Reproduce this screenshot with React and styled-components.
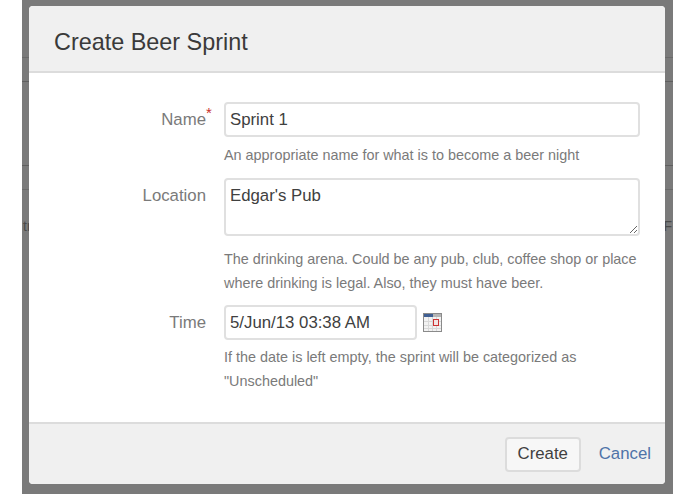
import React from 'react';
import styled, { createGlobalStyle } from 'styled-components';

const GlobalStyle = createGlobalStyle`
  html, body {
    margin: 0;
    background: #fff;
    font-family: "Liberation Sans", Arial, sans-serif;
  }
`;

const Backdrop = styled.div`
  position: relative;
  margin: 0 22px;
  height: 494px;
  background: #7a7a7a;
  overflow: hidden;
`;

const BehindRow = styled.div`
  height: ${props => props.$height}px;
  box-sizing: border-box;
  border-bottom: 1px solid ${props => props.$line};
`;

const BehindText = styled.div`
  display: flex;
  justify-content: space-between;
  height: 20px;
  padding: 0 1px;
  font-size: 14px;
  line-height: 20px;
  color: #4a4a4a;
`;

const Modal = styled.div`
  position: absolute;
  left: 7px;
  top: 6px;
  width: 636px;
  height: 478px;
  display: flex;
  flex-direction: column;
  background: #fff;
  border-radius: 4px;
  overflow: hidden;
`;

const Header = styled.header`
  height: 67px;
  box-sizing: border-box;
  padding: 23px 25px 0;
  background: #f0f0f0;
  border-bottom: 2px solid #dcdcdc;
`;

const Title = styled.h2`
  margin: 0;
  font-size: 23.4px;
  line-height: 26px;
  font-weight: 400;
  color: #3a3a3a;
`;

const Form = styled.form`
  flex: 1;
  padding-top: 29px;
`;

const Field = styled.div`
  display: grid;
  grid-template-columns: 177px 1fr;
  column-gap: 18px;
  margin-bottom: ${props => props.$gap}px;
`;

const Label = styled.label`
  justify-self: end;
  position: relative;
  padding-top: 8px;
  font-size: 16.8px;
  line-height: 20px;
  color: #7a7a7a;
`;

const Required = styled.span`
  position: absolute;
  left: 100%;
  top: 4px;
  font-size: 15px;
  line-height: 14px;
  color: #c9302c;
`;

const Control = styled.div`
  display: flex;
  align-items: center;
  gap: 6px;
`;

const inputStyle = `
  box-sizing: border-box;
  padding: 0 4px;
  background: #fff;
  border: 2px solid #e0e0e0;
  border-radius: 4px;
  font-family: "Liberation Sans", Arial, sans-serif;
  font-size: 16.8px;
  color: #404040;
  outline: none;
`;

const TextInput = styled.input`
  ${inputStyle}
  display: block;
  width: ${props => props.$width}px;
  height: 35px;
`;

const TextArea = styled.textarea`
  ${inputStyle}
  display: block;
  width: 416px;
  height: 58px;
  padding-top: 6px;
  line-height: 20px;
  resize: vertical;
`;

const Hint = styled.p`
  grid-column: 2;
  width: 430px;
  margin: ${props => props.$top}px 0 0;
  font-size: 14.4px;
  line-height: 24px;
  color: #7a7a7a;
`;

const Footer = styled.footer`
  height: 62px;
  box-sizing: border-box;
  display: flex;
  align-items: center;
  justify-content: flex-end;
  gap: 18px;
  padding-right: 14px;
  background: #f0f0f0;
  border-top: 2px solid #dcdcdc;
`;

const CreateButton = styled.button`
  width: 76px;
  height: 35px;
  padding: 0;
  background: #f7f7f7;
  border: 2px solid #dcdcdc;
  border-radius: 4px;
  font-family: "Liberation Sans", Arial, sans-serif;
  font-size: 16.8px;
  color: #404040;
`;

const CancelLink = styled.a`
  font-size: 16.8px;
  color: #4f73a8;
  text-decoration: none;
`;

const CalendarIcon = () => (
  <svg width="19" height="19" viewBox="0 0 19 19" aria-hidden="true">
    <rect x="0.5" y="0.5" width="18" height="18" fill="#f2f2f2" stroke="#8a8a8a" />
    <rect x="1" y="1" width="9" height="3" fill="#3f5f93" />
    <rect x="10" y="1" width="8" height="3" fill="#b5b5b5" />
    <path d="M1 8.5h17M1 12.5h17M1 15.5h17M5.5 4v14M9.5 4v14M13.5 4v14" stroke="#d8d8d8" />
    <rect x="10.5" y="6.5" width="5" height="6" fill="#f4e4e4" stroke="#cc3333" />
  </svg>
);

const App = () => (
  <>
    <GlobalStyle />
    <Backdrop>
      <BehindRow $height={58} $line="#6a6a6a" />
      <BehindRow $height={24} $line="#5f5f5f" />
      <BehindRow $height={84} $line="#5f5f5f" />
      <BehindRow $height={24} $line="#6a6a6a" />
      <BehindRow $height={26} $line="transparent" />
      <BehindText>
        <span>tr</span>
        <span>IF</span>
      </BehindText>
      <Modal>
        <Header>
          <Title>Create Beer Sprint</Title>
        </Header>
        <Form>
          <Field $gap={11}>
            <Label>
              Name
              <Required>*</Required>
            </Label>
            <TextInput $width={416} defaultValue="Sprint 1" />
            <Hint $top={6}>An appropriate name for what is to become a beer night</Hint>
          </Field>
          <Field $gap={10}>
            <Label>Location</Label>
            <TextArea defaultValue="Edgar's Pub" />
            <Hint $top={11}>
              The drinking arena. Could be any pub, club, coffee shop or place
              <br />
              where drinking is legal. Also, they must have beer.
            </Hint>
          </Field>
          <Field $gap={0}>
            <Label>Time</Label>
            <Control>
              <TextInput $width={193} defaultValue="5/Jun/13 03:38 AM" />
              <CalendarIcon />
            </Control>
            <Hint $top={5}>
              If the date is left empty, the sprint will be categorized as
              <br />
              "Unscheduled"
            </Hint>
          </Field>
        </Form>
        <Footer>
          <CreateButton type="button">Create</CreateButton>
          <CancelLink href="#">Cancel</CancelLink>
        </Footer>
      </Modal>
    </Backdrop>
  </>
);

export default App;
